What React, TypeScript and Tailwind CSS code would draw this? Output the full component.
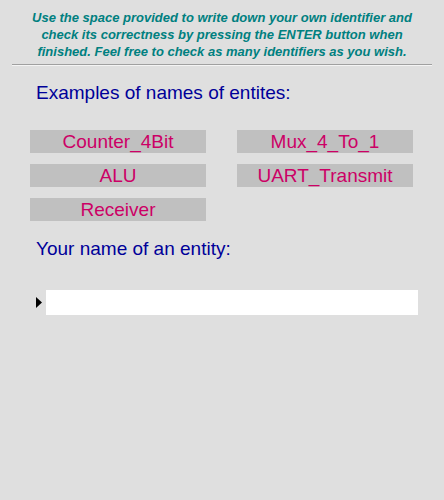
import React from 'react'

const examples = ['Counter_4Bit', 'Mux_4_To_1', 'ALU', 'UART_Transmit', 'Receiver']

export default function App() {
  return (
    <div className="min-h-screen bg-[#dfdfdf] font-['Liberation_Sans',Arial,sans-serif]">
      {/* Instructions */}
      <p className="pt-[9px] text-center text-[13px] leading-[17px] font-bold italic text-[#008080]">
        Use the space provided to write down your own identifier and
        <br />
        check its correctness by pressing the ENTER button when
        <br />
        finished. Feel free to check as many identifiers as you wish.
      </p>
      <div className="mx-[12px] mt-[4px] border-t border-b border-t-[#a0a0a0] border-b-[#f4f4f4]" />

      {/* Examples */}
      <h2 className="mt-[16px] pl-[36px] text-[19px] leading-[22px] text-[#000099]">
        Examples of names of entites:
      </h2>
      <div className="mt-[26px] grid grid-cols-[176px_176px] gap-x-[31px] gap-y-[11px] pl-[30px]">
        {examples.map((name) => (
          <div
            key={name}
            className="h-[23px] bg-[#c0c0c0] text-center text-[19px] leading-[23px] text-[#cc0066]"
          >
            {name}
          </div>
        ))}
      </div>

      {/* Entry */}
      <h2 className="mt-[17px] pl-[36px] text-[19px] leading-[22px] text-[#000099]">
        Your name of an entity:
      </h2>
      <div className="mt-[30px] flex items-center gap-[4px] pl-[36px]">
        <svg width="6" height="11" viewBox="0 0 6 11">
          <path d="M0 0 L6 5.5 L0 11 Z" fill="#000" />
        </svg>
        <input
          type="text"
          className="h-[25px] w-[372px] bg-white px-1 text-[15px] outline-none"
        />
      </div>
    </div>
  )
}
